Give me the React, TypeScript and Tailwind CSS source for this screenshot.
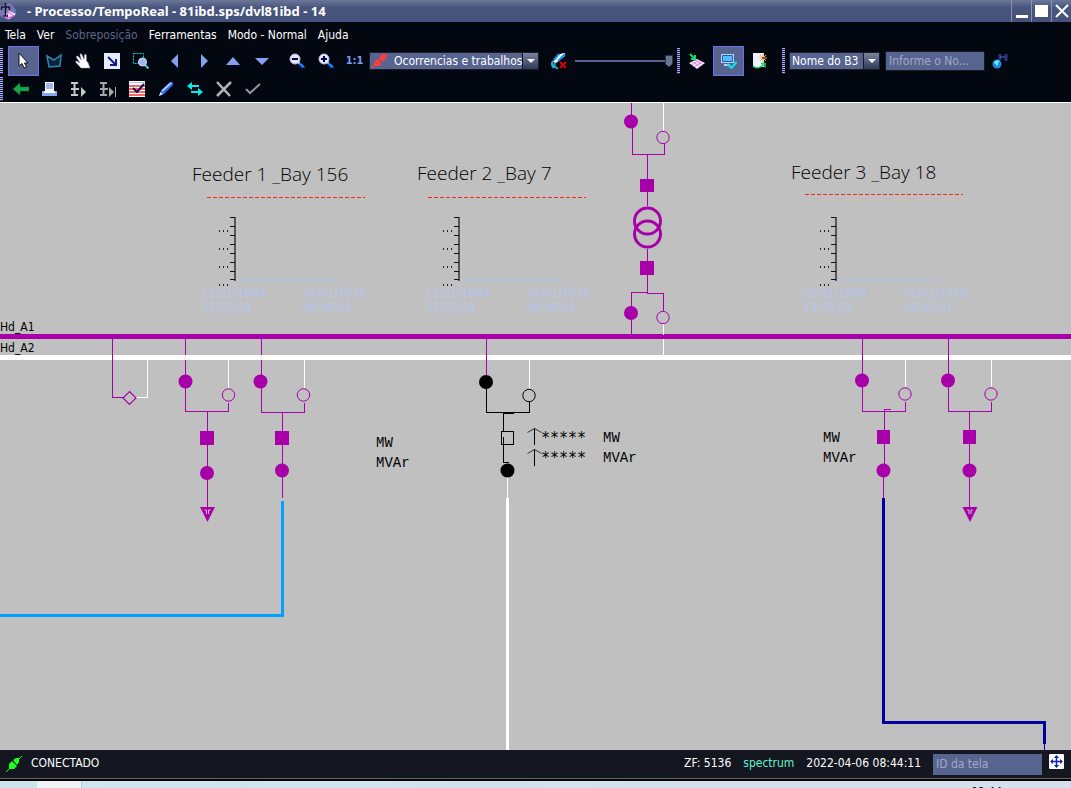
import React from 'react';

const PURPLE = '#a800a8';

function Grip({ className = '' }: { className?: string }) {
  return (
    <span
      aria-hidden="true"
      className={`w-[3px] shrink-0 bg-[repeating-linear-gradient(to_bottom,#a9a9f5_0_1px,#26264a_1px_2px)] ${className}`}
    />
  );
}

type ToolProps = { label: string; active?: boolean; className?: string; children: React.ReactNode };

function Tool({ label, active = false, className = '', children }: ToolProps) {
  return (
    <button
      type="button"
      aria-label={label}
      aria-pressed={active}
      className={`flex shrink-0 items-center justify-center ${
        active ? 'h-[30px] w-[31px] border border-[#6f70f0] bg-[#57648f]' : 'h-[26px] w-[29px]'
      } ${className}`}
    >
      {children}
    </button>
  );
}

function Icon({ children, size = 16 }: { children: React.ReactNode; size?: number }) {
  return (
    <svg width={size} height={size} viewBox="0 0 16 16" fill="none" aria-hidden="true">
      {children}
    </svg>
  );
}

function Magnifier({ plus = false }: { plus?: boolean }) {
  return (
    <Icon>
      <path d="M9 9l2 2" stroke="#ccd" strokeWidth="2" />
      <path d="M10.500 10.500l4 4" stroke="#0a62ff" strokeWidth="3" />
      <path d="M12 11l3.500 3.500" stroke="#2fb5ff" strokeWidth="1" />
      <circle cx="6" cy="6" r="5" fill="#e6e8ff" stroke="#b8bce8" />
      <path d={plus ? 'M3 6h6M6 3v6' : 'M3 6h6'} stroke="#000048" strokeWidth="2" />
    </Icon>
  );
}

function Dropdown({ label, value, className, icon }: { label: string; value: string; className: string; icon?: React.ReactNode }) {
  return (
    <div className={`relative flex h-[18px] shrink-0 items-center border border-[#1a1d28] bg-[#57648f] pr-[15px] text-white ${className}`}>
      {icon}
      <select aria-label={label} className="h-4 min-w-0 flex-1 appearance-none pl-[2px] text-xs leading-4 outline-none">
        <option>{value}</option>
      </select>
      <span className="pointer-events-none absolute inset-y-0 right-0 flex w-4 items-center justify-center border-l border-[#151a28] bg-linear-to-b from-[#7b849d] to-[#2f3a5c]">
        <svg width="8" height="4" viewBox="0 0 8 4" aria-hidden="true"><path d="M0 0h8L4 4z" fill="#fff" /></svg>
      </span>
    </div>
  );
}

function TitleBar() {
  const box = 'flex h-[22px] w-[20px] items-center justify-center border-l border-[#8d93a6]';
  return (
    <header className="flex h-[22px] shrink-0 items-center bg-linear-to-b from-[#6b7898] from-0% via-[#48557e] via-35% to-[#44517c] text-white">
      <svg width="17" height="18" viewBox="0 0 17 18" aria-hidden="true">
        <path d="M0 4l10-3 6 7-1 6-7 4-8-4z" fill="#7c78b4" />
        <path d="M3 14l6-5 7 3-7 5z" fill="#f0e4ff" />
        <path d="M8 10l6 4-7 2z" fill="none" stroke="#e648e0" />
        <path d="M5.500 1v13M1 5h9M1.500 5v3M9.500 5v3M3 14h5" stroke="#10162e" strokeWidth="1.500" />
      </svg>
      <h1 className="ml-[10px] flex-1 truncate font-['Noto_Sans',sans-serif] text-[13px] leading-5 font-bold">- Processo/TempoReal - 81ibd.sps/dvl81ibd - 14</h1>
      <button type="button" aria-label="Minimizar" className={box}>
        <svg width="12" height="14" aria-hidden="true"><path d="M0 11h12v3H0z" fill="#fff" /></svg>
      </button>
      <button type="button" aria-label="Maximizar" className={box}>
        <svg width="13" height="12" aria-hidden="true"><path d="M0 0h13v12H0z" fill="#fff" /></svg>
      </button>
      <button type="button" aria-label="Fechar" className={box}>
        <svg width="14" height="14" aria-hidden="true"><path d="M1 1l12 12M13 1L1 13" stroke="#fff" strokeWidth="2" /></svg>
      </button>
    </header>
  );
}

function MenuBar() {
  const items = ['Tela', 'Ver', 'Sobreposição', 'Ferramentas', 'Modo - Normal', 'Ajuda'];
  return (
    <nav className="flex h-6 shrink-0 items-center gap-[11px] pt-[2px] pl-[5px] text-white">
      {items.map((item) => (
        <button key={item} type="button" disabled={item === 'Sobreposição'} className="leading-4 disabled:text-[#5b6585]">
          {item}
        </button>
      ))}
    </nav>
  );
}

function MainToolbar() {
  return (
    <div className="flex h-[30px] shrink-0 items-center overflow-hidden">
      <Grip className="mr-[5px] h-[26px]" />
      <Tool label="Selecionar" active>
        <Icon>
          <path d="M3 0v13l3-2.500L8 15l2.500-1-2-4H12z" fill="#fff" stroke="#111" />
        </Icon>
      </Tool>
      <Tool label="Polígono">
        <Icon>
          <path d="M1 3l7 4 7-5-1 11-11 1z" fill="#0c2436" stroke="#2d88b8" strokeWidth="1.500" />
        </Icon>
      </Tool>
      <Tool label="Mover">
        <Icon>
          <path d="M6 15L1 9.500c-1-1.500.5-2 1.500-1L5 10 1.500 4.500c-.5-1.500 1-2 2-.8L6.500 7 5 2C5 .5 6.500.5 7 1.800L9 6.500 9.500 2c.3-1.300 1.700-1 1.800.3L11.500 8l1.500 1.500 2 5.500z" fill="#fff" stroke="#8b91b8" strokeWidth=".5" />
        </Icon>
      </Tool>
      <Tool label="Ajustar">
        <Icon>
          <path d="M0 0h16v16H0z" fill="#e8ebff" />
          <path d="M4 4l7 7M12 6v6H6" stroke="#141c88" strokeWidth="2" />
        </Icon>
      </Tool>
      <Tool label="Zoom de área">
        <Icon>
          <path d="M.5.500h10v10H.5z" stroke="#00d7cf" strokeDasharray="2 1" />
          <path d="M12 12l3.500 3.500" stroke="#45d3c5" strokeWidth="2" />
          <circle cx="9.500" cy="9" r="4" fill="#9db4ee" stroke="#dce2ff" />
        </Icon>
      </Tool>
      <Tool label="Esquerda" className="ml-[5px]"><Icon><path d="M11 1v14L4 8z" fill="#86a0f4" /></Icon></Tool>
      <Tool label="Direita"><Icon><path d="M5 1v14l7-7z" fill="#86a0f4" /></Icon></Tool>
      <Tool label="Acima"><Icon><path d="M1 12h14L8 4z" fill="#86a0f4" /></Icon></Tool>
      <Tool label="Abaixo"><Icon><path d="M1 5h14l-7 7z" fill="#86a0f4" /></Icon></Tool>
      <Tool label="Diminuir zoom" className="ml-[6px]"><Magnifier /></Tool>
      <Tool label="Aumentar zoom"><Magnifier plus /></Tool>
      <Tool label="Escala 1:1"><span className="text-[11px] leading-4 font-bold text-[#739cf5]">1:1</span></Tool>
      <Dropdown
        label="Camada"
        value="Ocorrencias e trabalhos"
        className="w-[170px]"
        icon={
          <svg className="mr-[4px] shrink-0" width="18" height="16" viewBox="0 0 18 16" aria-hidden="true">
            <path d="M2 15l4-4M9 8l4-4" stroke="#ff3c3c" strokeWidth="1.500" />
            <path d="M4 13V9l3-3 5 5-3 2zM9 5l3-4h5l-1 4-3 4z" fill="#ff3c3c" />
          </svg>
        }
      />
      <Tool label="Desligar destaque" className="ml-[5px]">
        <Icon>
          <path d="M14 0C8 0 4 4 2 9l3 1 9-7z" fill="#fff" />
          <path d="M14 1L7 8M8 1L3 7" stroke="#188cff" strokeWidth="2" />
          <path d="M2 8c-2 3-1 5 1 7M4 10l-1 3 4 3" stroke="#20b2dc" strokeWidth="2" />
          <path d="M9 9l6 6M15 9l-6 6" stroke="#d80000" strokeWidth="2" />
        </Icon>
      </Tool>
      <input
        type="range"
        aria-label="Intensidade"
        defaultValue={100}
        className="ml-[2px] h-4 w-[98px] shrink-0 appearance-none bg-[linear-gradient(#57648f,#57648f)] bg-[length:100%_2px] bg-center bg-no-repeat [&::-webkit-slider-thumb]:h-3 [&::-webkit-slider-thumb]:w-2 [&::-webkit-slider-thumb]:appearance-none [&::-webkit-slider-thumb]:border [&::-webkit-slider-thumb]:border-[#26324f] [&::-webkit-slider-thumb]:bg-[#68758f] [&::-webkit-slider-thumb]:[clip-path:polygon(0_0,100%_0,100%_70%,50%_100%,0_70%)]"
      />
      <Grip className="ml-[4px] h-[26px]" />
      <Tool label="Importar camada" className="ml-[2px]">
        <Icon>
          <path d="M0 10l8-4 8 4-8 6z" fill="#f2e4f4" />
          <path d="M3 11.500L11 7M5.500 13.500l8-5M3 8.500l8 5M6 7l8 5" stroke="#df3edb" strokeDasharray="1 1" />
          <path d="M1 1l5 5M6 2v4H2" stroke="#00e46a" strokeWidth="2" />
        </Icon>
      </Tool>
      <Tool label="Monitorar" active className="ml-[2px]">
        <Icon>
          <path d="M0 1h13v9H0z" fill="#b9d4ff" />
          <path d="M1.500 2.500h10v6h-10z" fill="#59b8ff" stroke="#1561b5" />
          <path d="M3 12h6" stroke="#c7cce0" strokeWidth="2" />
          <path d="M6.500 11l4 4 5-6" stroke="#00ece8" strokeWidth="2" />
        </Icon>
      </Tool>
      <Tool label="Nova página" className="ml-[1px]">
        <Icon>
          <path d="M1 0h11v14H1z" fill="#edf0ff" />
          <path d="M11 1v8M7 5h8M8 2l6 6M14 2L8 8" stroke="#ffad22" />
          <path d="M10 5h2M11 4v2" stroke="#3140a0" />
          <path d="M1 13c3 3 8 2 11-2M9 10.500h4v4" stroke="#24cf5d" strokeWidth="1.500" />
        </Icon>
      </Tool>
      <Grip className="ml-[8px] h-[26px]" />
      <Dropdown label="Campo de busca" value="Nome do B3" className="ml-[4px] w-[91px]" />
      <input
        type="text"
        aria-label="Nome do equipamento"
        placeholder="Informe o No..."
        className="ml-[5px] h-5 w-[100px] shrink-0 border border-[#151a28] bg-[#57648f] px-[3px] leading-4 text-white outline-none placeholder:text-[#a3a9c6]"
      />
      <Tool label="Buscar">
        <Icon>
          <path d="M8 1v6M14 1v7" stroke="#2b3484" strokeWidth="3" />
          <path d="M8 4h5" stroke="#626bae" strokeWidth="1" />
          <circle cx="5" cy="11" r="4.500" fill="#1e87e8" />
          <path d="M2 9l3-2 3 1-2 2v3l-3-2z" fill="#68eaf5" />
        </Icon>
      </Tool>
    </div>
  );
}

function EditToolbar() {
  return (
    <div className="flex h-[26px] shrink-0 items-center">
      <Grip className="mr-[3px] h-[24px]" />
      <Tool label="Voltar"><Icon><path d="M0 8l7-6v4h9v4H7v4z" fill="#16a94c" stroke="#0b7136" strokeWidth=".5" /></Icon></Tool>
      <Tool label="Imprimir">
        <Icon>
          <path d="M3 1h9v10H3z" fill="#f2f4ff" />
          <path d="M4 3h7M4 5h7M4 7h7" stroke="#5777de" />
          <path d="M0 10h15v5H0z" fill="#84a6f8" />
          <path d="M2 10h11v2H2z" fill="#fff" />
        </Icon>
      </Tool>
      <Tool label="Passo"><Icon><path d="M0 2h7M0 8h8M0 14h7M3.500 2v12" stroke="#c8c8c8" strokeWidth="2" /><path d="M10 6l5 5-5 5z" fill="#c8c8c8" /></Icon></Tool>
      <Tool label="Passo final"><Icon><path d="M0 2h7M0 8h8M0 14h7M3.500 2v12" stroke="#a9a9a9" strokeWidth="2" /><path d="M9 6l5 5-5 5zM15 6h1v10h-1z" fill="#a9a9a9" /></Icon></Tool>
      <Tool label="Validar tabela">
        <Icon>
          <path d="M0 0h16v16H0z" fill="#fff" />
          <path d="M0 1.500h16" stroke="#b8bfe2" />
          <path d="M0 5h16M0 8h16M0 11h16M0 14h16" stroke="#f23434" strokeWidth="1.500" />
          <path d="M4 7l4 4 7-8" stroke="#101052" strokeWidth="2" />
        </Icon>
      </Tool>
      <Tool label="Editar">
        <Icon>
          <path d="M1 15l2-5 9-9c2-1 4 1 3 3l-9 9z" fill="#316af0" />
          <path d="M4 10l9-8" stroke="#a8caff" strokeWidth="2" />
          <path d="M1 15l1.500-4L5 13z" fill="#dce4f8" />
        </Icon>
      </Tool>
      <Tool label="Trocar"><Icon><path d="M0 5l5-4v3h7v2H5v3zM16 11l-5-4v3H4v2h7v3z" fill="#00eeee" /></Icon></Tool>
      <Tool label="Cancelar"><Icon><path d="M1 1l13 14M15 1L1 15" stroke="#b5b5b5" strokeWidth="2.500" /></Icon></Tool>
      <Tool label="Confirmar"><Icon><path d="M1 8l4 4L15 3" stroke="#929292" strokeWidth="2" /></Icon></Tool>
    </div>
  );
}

function Dot({ x, y, color = PURPLE }: { x: number; y: number; color?: string }) {
  return <circle cx={x} cy={y} r="7" fill={color} />;
}

function Ring({ x, y, color = PURPLE }: { x: number; y: number; color?: string }) {
  return <circle cx={x} cy={y} r="6.200" fill="none" stroke={color} />;
}

function Ground({ x, y }: { x: number; y: number }) {
  return (
    <g>
      <path d={`M${x - 7.5} ${y}h15l-7.500 15z`} fill={PURPLE} />
      <path d={`M${x - 3} ${y + 3}h2v4M${x + 3} ${y + 3}h-2v4`} fill="none" stroke="#d8c0d8" />
    </g>
  );
}

function Feeder({ title, x, y, dashX, dashY, chartX }: { title: string; x: number; y: number; dashX: number; dashY: number; chartX: number }) {
  const ticks = [0, 9, 18, 27, 36, 45, 54, 62];
  return (
    <g>
      <text x={x} y={y} fontSize="19" fontWeight="300" fontFamily="'Open Sans', 'Noto Sans', sans-serif">{title}</text>
      <path d={`M${dashX} ${dashY}h158`} stroke="#f82818" strokeDasharray="4 2" shapeRendering="crispEdges" />
      <g transform={`translate(${chartX} 0)`}>
        <path d="M33 217v64" stroke="#585858" strokeWidth="2" />
        {ticks.map((t) => <path key={t} d={`M28 ${217.5 + t}h5`} stroke="#111" />)}
        {[230, 248, 266, 284].map((t) => <path key={t} d={`M17 ${t + 1}h1m3 0h1m3 0h1`} stroke="#222" strokeWidth="2" />)}
        <path d="M34 280h102" stroke="#b4c2e4" strokeWidth="2" />
        <path d="M33.500 281v3M135.500 279v5" stroke="#b4c2e4" />
        <g fill="#b3c6f4" fontSize="11" fontFamily="'DejaVu Sans', sans-serif">
          <text x="0" y="297">12/31/1969</text>
          <text x="0" y="311">23:59:59</text>
          <text x="101" y="297">01/01/1970</text>
          <text x="101" y="311">00:00:01</text>
        </g>
      </g>
    </g>
  );
}

function Diagram() {
  return (
    <main className="flex-1 border-t border-white bg-[#c0c0c0]">
      <svg viewBox="0 103 1071 647" className="block h-auto w-full" role="img" aria-label="Diagrama unifilar">
        <g shapeRendering="crispEdges" fill="none" stroke={PURPLE}>
          <path d="M185.500 339v36M261.500 339v36" />
          <path d="M0 336.500h1071" strokeWidth="5" />
          <path d="M0 357.500h1071" strokeWidth="5" stroke="#fff" />
          <path d="M112.500 339v58.500h11M185.500 360v15M261.500 360v15M486.500 339v36M862.500 339v36M948.500 339v36" />
          <path d="M185.500 388v23.500h43v-9M207.500 411v96M261.500 388v24.500h43v-10M282.500 412v86" />
          <path d="M862.500 387v24.500h43v-10M891 409.500h-6.500v54M883.500 470v28M948.500 387v24.500h43v-10M969.500 411v96" />
          <path d="M631.500 103v12M632.500 128v26.500h32v-11M647.500 154v52M647.500 249v44M631.500 307v-14.500h16v1h16v17M631.500 320v14" />
          <path d="M663.500 103v28M663.500 324v11M663.500 339v16M136 397.500h11.500V360M228.500 360v28M304.500 360v28M529.500 360v29M905.500 360v27M991.500 360v27M507.500 477v21" stroke="#fff" />
          <path d="M507.500 498v252" stroke="#fff" strokeWidth="3" />
          <path d="M282.500 501v114.500H0" stroke="#00a2ff" strokeWidth="3" />
          <path d="M883.500 498v224.500h161V744" stroke="#00009c" strokeWidth="3" />
          <path d="M1044.500 744v6" stroke="#00009c" />
          <path d="M486.500 388v24.500h43v-11M514 413.500h-10.500v18M501.500 431.500h12v13h-12zM503.500 437v25.500h5M534.500 428v17M534.500 449v17" stroke="#000" />
        </g>
        <g fill={PURPLE}>
          <path d="M640 179h14v13h-14zM640 261h14v14h-14zM200 431h14v14h-14zM275 431h14v14h-14zM877 430h13v14h-13zM963 430h13v14h-13z" />
        </g>
        <g fill="none" stroke={PURPLE} strokeWidth="3">
          <circle cx="647.500" cy="221" r="13" />
          <circle cx="647.500" cy="234" r="13" />
        </g>
        <path d="M129.500 391.500l6.500 6.500-6.500 6.500-6.500-6.500z" fill="none" stroke={PURPLE} strokeWidth="1.200" />
        <Dot x={631} y={121.5} /><Ring x={663} y={137.5} />
        <Dot x={631} y={313} /><Ring x={663} y={317.5} />
        <Dot x={185.5} y={381.5} /><Ring x={228.5} y={395} />
        <Dot x={260.5} y={381.5} /><Ring x={303.5} y={395} />
        <Dot x={207} y={473} /><Dot x={282} y={470.5} />
        <Dot x={486} y={382} color="#000" /><Ring x={529} y={395.5} color="#000" />
        <Dot x={507.5} y={470.5} color="#000" />
        <Dot x={862} y={380.5} /><Ring x={905} y={394} />
        <Dot x={948} y={380.5} /><Ring x={991} y={394} />
        <Dot x={883.5} y={470.5} /><Dot x={969.5} y={470.5} />
        <Ground x={207.5} y={507} />
        <Ground x={970} y={507} />
        <path d="M527.500 432.500l7-4 7 4M527.500 453.500l7-4 7 4" fill="none" stroke="#333" />
        <g fontSize="12">
          <text x="0" y="331">Hd_A1</text>
          <text x="0" y="352">Hd_A2</text>
        </g>
        <g fontSize="15" fontFamily="'DejaVu Sans Mono', monospace">
          <text x="541" y="443">*****</text>
          <text x="541" y="463">*****</text>
        </g>
        <g fontSize="14" fontFamily="'Liberation Mono', monospace">
          <text x="376" y="447">MW</text>
          <text x="376" y="467">MVAr</text>
          <text x="603" y="442">MW</text>
          <text x="603" y="462">MVAr</text>
          <text x="823" y="442">MW</text>
          <text x="823" y="462">MVAr</text>
        </g>
        <Feeder title="Feeder 1 _Bay 156" x={192} y={181} dashX={207} dashY={197.5} chartX={202} />
        <Feeder title="Feeder 2 _Bay 7" x={417} y={180} dashX={428} dashY={197.5} chartX={426} />
        <Feeder title="Feeder 3 _Bay 18" x={791} y={179} dashX={805} dashY={194.5} chartX={803} />
      </svg>
    </main>
  );
}

function StatusBar() {
  return (
    <footer className="shrink-0">
      <div className="flex h-7 items-center bg-[#141720] pr-[7px] pl-[6px] text-white">
        <svg width="16" height="16" viewBox="0 0 16 16" aria-hidden="true">
          <path d="M0 16l4-4M12 4l4-4" stroke="#20ff20" />
          <path d="M3 13V8l3-3 5 5-3 3zM7 4l3-2h3v4l-2 3z" fill="#20ff20" />
        </svg>
        <span className="ml-[9px] pb-[2px] leading-4">CONECTADO</span>
        <span className="ml-auto pb-[2px] leading-4">ZF: 5136</span>
        <span className="ml-3 pb-[2px] leading-4 text-[#63f0cc]">spectrum</span>
        <span className="ml-3 pb-[2px] leading-4">2022-04-06 08:44:11</span>
        <input
          type="text"
          aria-label="ID da tela"
          placeholder="ID da tela"
          className="ml-3 h-[21px] w-[109px] bg-[#57648f] px-[3px] leading-4 text-white outline-none placeholder:text-[#a3a9c6]"
        />
        <button type="button" aria-label="Centralizar" className="mt-1 ml-[7px] flex size-[15px] items-center justify-center self-start rounded-[1px] bg-white">
          <svg width="13" height="13" viewBox="0 0 13 13" aria-hidden="true">
            <path d="M6.500 1v11M1 6.500h11" stroke="#1424b0" strokeWidth="1.500" />
            <path d="M6.500 0L9 3H4zM6.500 13L4 10h5zM0 6.500L3 4v5zM13 6.500L10 9V4z" fill="#1424b0" />
          </svg>
        </button>
      </div>
      <div className="h-[3px] border-t border-[#666] bg-black" />
      <div className="flex h-[7px] overflow-hidden bg-linear-to-r from-[#cfe5ee] to-[#d6dfec] text-black">
        <span className="w-[37px] bg-[#cde4ea]" />
        <span className="w-[45px] border-r border-[#b4c6d4] bg-[#eef3f6]" />
        <span className="mt-[3px] mr-[69px] ml-auto leading-4">08:44</span>
      </div>
    </footer>
  );
}

export default function App() {
  return (
    <div className="flex min-h-screen flex-col overflow-hidden bg-[#030710] font-['DejaVu_Sans_Condensed','DejaVu_Sans',sans-serif] text-xs">
      <TitleBar />
      <MenuBar />
      <MainToolbar />
      <EditToolbar />
      <Diagram />
      <StatusBar />
    </div>
  );
}
